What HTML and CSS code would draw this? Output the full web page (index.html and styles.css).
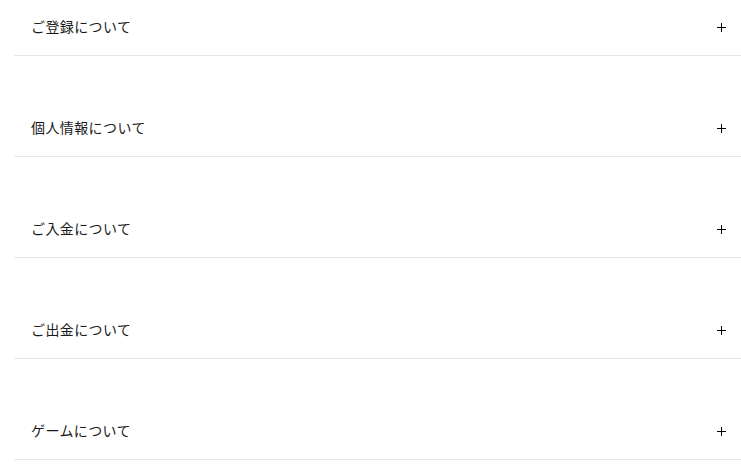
FILE: index.html
```html
<!DOCTYPE html>
<html lang="ja">
<head>
<meta charset="utf-8">
<link rel="stylesheet" href="styles.css">
</head>
<body>
<div class="faq">
  <div class="item"><span class="title">ご登録について</span><svg class="plus" width="9" height="9" viewBox="0 0 9 9"><path d="M4.5 0V9M0 4.5H9" stroke="#000" stroke-width="1"/></svg></div>
  <div class="item"><span class="title">個人情報について</span><svg class="plus" width="9" height="9" viewBox="0 0 9 9"><path d="M4.5 0V9M0 4.5H9" stroke="#000" stroke-width="1"/></svg></div>
  <div class="item"><span class="title">ご入金について</span><svg class="plus" width="9" height="9" viewBox="0 0 9 9"><path d="M4.5 0V9M0 4.5H9" stroke="#000" stroke-width="1"/></svg></div>
  <div class="item"><span class="title">ご出金について</span><svg class="plus" width="9" height="9" viewBox="0 0 9 9"><path d="M4.5 0V9M0 4.5H9" stroke="#000" stroke-width="1"/></svg></div>
  <div class="item"><span class="title">ゲームについて</span><svg class="plus" width="9" height="9" viewBox="0 0 9 9"><path d="M4.5 0V9M0 4.5H9" stroke="#000" stroke-width="1"/></svg></div>
</div>
</body>
</html>
```
FILE: styles.css
```css
html, body { margin: 0; padding: 0; background: #fff; }
body { font-family: "Noto Sans CJK JP", "Noto Sans", sans-serif; color: #1a1a1a; }
.faq { padding-left: 14px; display: flex; flex-direction: column; gap: 45px; }
.item {
  box-sizing: border-box;
  height: 56px;
  border-bottom: 1px solid #e6e6e6;
  display: flex;
  align-items: center;
  justify-content: space-between;
  padding: 0 15px 3px 17px;
  font-size: 14px;
}
.title { line-height: 20px; letter-spacing: 0.4px; }
.plus { display: block; margin-top: 2px; }
```
